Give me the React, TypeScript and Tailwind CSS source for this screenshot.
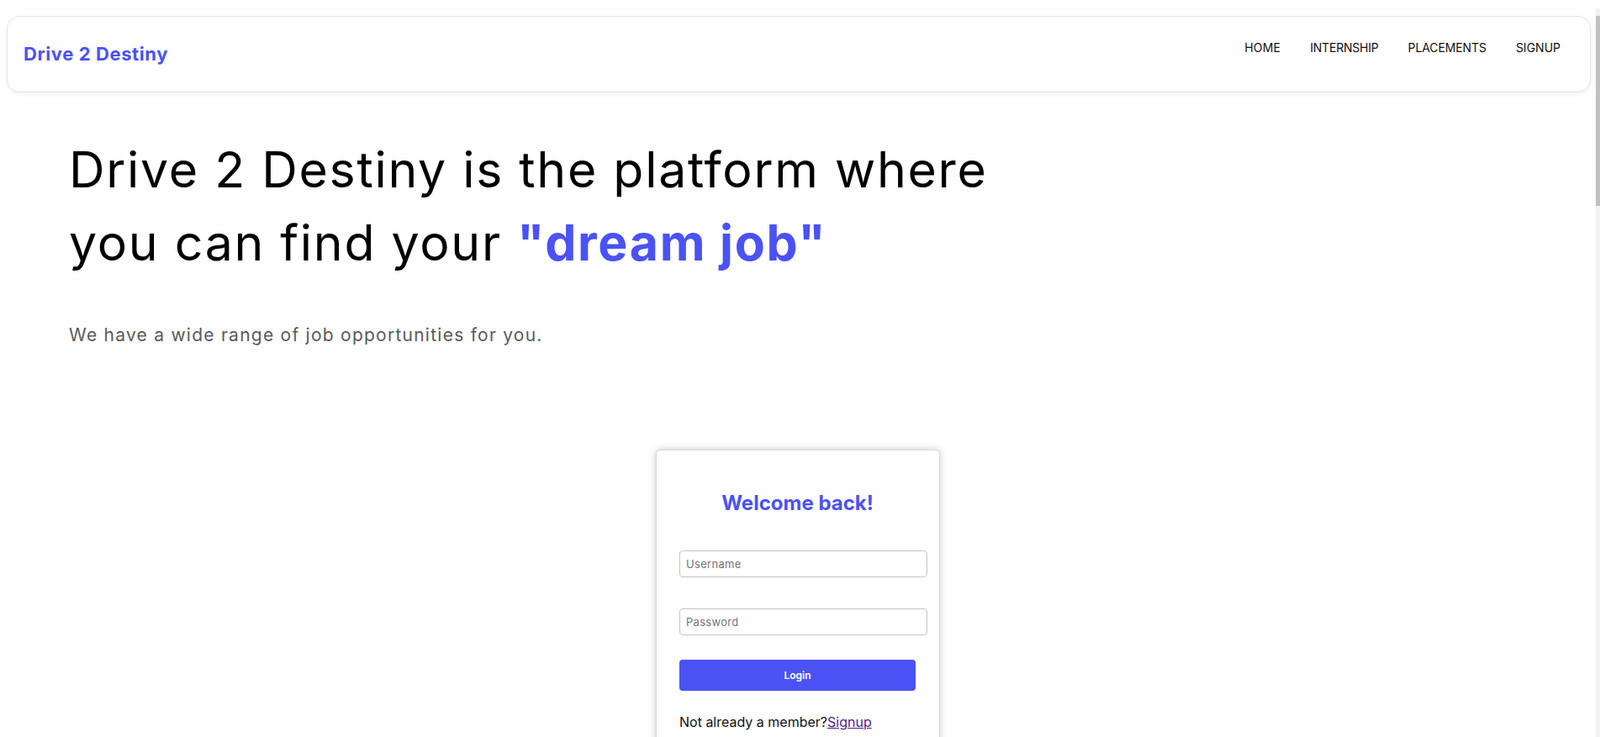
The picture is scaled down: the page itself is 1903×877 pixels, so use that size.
import React from "react";

const font = { fontFamily: "Inter, 'Noto Sans', sans-serif" };

function Navbar() {
  return (
    <nav className="mt-[19px] ml-[8px] mr-[6px] h-[91px] rounded-[15px] border border-[#e4e4e4] bg-white shadow-[0_2px_6px_rgba(0,0,0,0.06)] flex items-center justify-between pl-[19px] pr-[35px]">
      <a className="text-[22px] font-bold text-[#4a52f5] tracking-[0.6px]">Drive 2 Destiny</a>
      <ul className="flex items-center gap-[35px] pb-[16px] text-[14px] text-[#111]">
        <li className="tracking-[0.2px]">HOME</li>
        <li className="tracking-[-0.2px]">INTERNSHIP</li>
        <li className="tracking-[-0.1px]">PLACEMENTS</li>
        <li>SIGNUP</li>
      </ul>
    </nav>
  );
}

function Hero() {
  return (
    <section className="pl-[82px] pt-[48px]">
      <h1 className="text-[59px] leading-[87px] font-normal text-black tracking-[1.7px]">
        Drive 2 Destiny is the platform where
        <br />
        you can find your <span className="font-bold text-[#4a52f5]">"dream job"</span>
      </h1>
      <p className="mt-[52px] text-[21px] leading-[30px] text-[#5a5a5a] tracking-[1.25px]">
        We have a wide range of job opportunities for you.
      </p>
    </section>
  );
}

function LoginCard() {
  return (
    <div className="flex justify-center pt-[121px]">
      <div className="w-[338px] rounded-[5px] border border-[#d8d8d8] bg-white shadow-[0_0_8px_rgba(0,0,0,0.22)] pl-[27px] pr-[28px] pt-[45px] pb-[40px]">
        <h2 className="text-center text-[24px] leading-[36px] font-bold text-[#4a52f5]">Welcome back!</h2>
        <input
          placeholder="Username"
          className="mt-[38px] block w-[295px] h-[32px] rounded-[4px] border border-[#c4c4c4] px-[7px] text-[13px] tracking-[0.3px] placeholder:text-[#757575] outline-none"
        />
        <input
          type="password"
          placeholder="Password"
          className="mt-[37px] block w-[295px] h-[32px] rounded-[4px] border border-[#c4c4c4] px-[7px] text-[13px] tracking-[0.3px] placeholder:text-[#757575] outline-none"
        />
        <button className="mt-[29px] block w-[281px] h-[37px] rounded-[4px] bg-[#4a52f5] text-white text-[12px] font-semibold">
          Login
        </button>
        <p className="mt-[26px] text-[16px] leading-[22px] text-[#111]">
          Not already a member?<a className="text-[#551a8b] underline">Signup</a>
        </p>
      </div>
    </div>
  );
}

export default function App() {
  return (
    <div className="flex h-screen overflow-hidden bg-white" style={font}>
      <main className="flex-1 min-w-0">
        <Navbar />
        <Hero />
        <LoginCard />
      </main>
      <aside className="w-[5px] pt-[10px] flex flex-col">
        <div className="flex-1 bg-[#f1f1f1] pt-[9px]">
          <div className="h-[226px] bg-[#c1c1c1]" />
        </div>
      </aside>
    </div>
  );
}
